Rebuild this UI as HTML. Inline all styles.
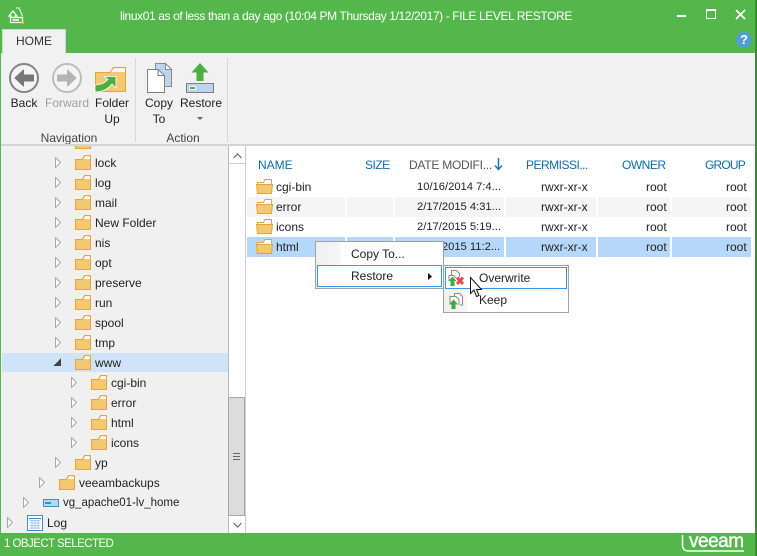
<!DOCTYPE html>
<html><head><meta charset="utf-8"><style>
html,body{margin:0;padding:0}
body{width:757px;height:556px;position:relative;overflow:hidden;background:#54b74b;font-family:"Liberation Sans",sans-serif;font-size:12px;color:#222}
.a{position:absolute;white-space:nowrap}
.t{position:absolute;white-space:nowrap;line-height:16px;height:16px}
.c{text-align:center;transform:translateX(-50%)}
svg{position:absolute;overflow:visible}
.h{color:#0b6cb3}
.d{font-size:11.2px}
.p{font-size:11.5px}
</style></head><body>
<svg width="0" height="0" style="position:absolute"><defs>
<symbol id="f" viewBox="0 0 16 15"><path d="M.5 4.500H7.500L9.500 .5H15.500V14.500H.5Z" fill="#f3c873" stroke="#e4a83a"/><path d="M8.800 4L10.300 1.200H14.800V4Z" fill="#fff"/></symbol>
<symbol id="o" viewBox="0 0 17 15"><path d="M1.500 8V3.500H7.500L9 .5H15.500V8Z" fill="#fff" stroke="#e0a63c"/><path d="M1.500 14.500L.5 5.500H16.500L15.500 14.500Z" fill="#f3c873" stroke="#e0a63c"/></symbol>
<symbol id="x" viewBox="0 0 6 11"><path d="M.5.5L5.500 5.500.5 10.500Z" fill="#fff" stroke="#a8a8a8"/></symbol>
</defs></svg>

<!-- title -->
<svg style="left:8px;top:7px" width="17" height="17" viewBox="0 0 17 17"><path d="M1 9L5 4 9 9H7V11H3V9Z" fill="none" stroke="#fff" stroke-width="1.200"/><path d="M8 1H11L14.500 9" fill="none" stroke="#dfe8de" stroke-width="1.200"/><path d="M2.500 10.500H14.500V15.500H2.500Z" fill="#54b74b" stroke="#fff" stroke-width="1.300"/><path d="M4.500 13H11" stroke="#fff" stroke-width="1.500"/><circle cx="14.500" cy="15" r="1.800" fill="#f0c050"/></svg>
<div class="t" style="left:120px;top:8px;color:#fff;font-size:12px;letter-spacing:-.39px">linux01 as of less than a day ago (10:04 PM Thursday 1/12/2017) - FILE LEVEL RESTORE</div>
<div class="a" style="left:677px;top:15px;width:9px;height:2px;background:#fff"></div>
<div class="a" style="left:706px;top:9px;width:8px;height:7px;border:1px solid #fff;border-top-width:2px"></div>
<svg style="left:735px;top:9px" width="11" height="11"><path d="M1 1L10 10M10 1L1 10" stroke="#fff" stroke-width="1.600"/></svg>
<div class="a" style="left:736px;top:32px;width:16px;height:16px;border-radius:50%;background:#4f9fd3;color:#fff;font-weight:bold;font-size:13px;line-height:16px;text-align:center">?</div>
<div class="a" style="left:755px;top:0;width:2px;height:556px;background:#3d8a36"></div>

<!-- ribbon -->
<div class="a" style="left:1px;top:53px;width:754px;height:91px;background:#f1f1f1"></div>
<div class="a" style="left:2px;top:29px;width:62px;height:25px;background:#f1f1f1;border:1px solid #d6d6d6;border-bottom:0"></div>
<div class="t" style="left:16px;top:33px;color:#333">HOME</div>

<svg style="left:9px;top:63px" width="30" height="30" viewBox="0 0 30 30"><circle cx="15" cy="15" r="14" fill="#f4f4f4" stroke="#838383" stroke-width="2"/><path d="M6 15L14.500 7V12H24.500V18H14.500V23Z" fill="#777" stroke="#777" stroke-linejoin="round"/></svg>
<svg style="left:52px;top:63px" width="30" height="30" viewBox="0 0 30 30"><circle cx="15" cy="15" r="14" fill="#f4f4f4" stroke="#bdbdbd" stroke-width="2"/><path d="M24 15L15.500 7V12H5.500V18H15.500V23Z" fill="#b4b4b4" stroke="#b4b4b4" stroke-linejoin="round"/></svg>
<svg style="left:95px;top:67px" width="32" height="25" viewBox="0 0 32 25"><path d="M.5 24.500V5.500H15L18.500 .5H30.500V24.500Z" fill="#f3c873" stroke="#e0a63c"/><path d="M16 5L19 1.200H29.800V5Z" fill="#fff"/><path d="M0 18C6 18 10 16 13 12.500L9.500 9.500H21V21L17 17C13 22 8 25 0 25Z" fill="#4bb040" stroke="#fff" stroke-width=".8"/></svg>
<div class="t c" style="left:24px;top:95px">Back</div>
<div class="t c" style="left:67px;top:95px;color:#a0a0a0">Forward</div>
<div class="t c" style="left:112px;top:95px">Folder</div>
<div class="t c" style="left:112px;top:111px">Up</div>
<div class="t c" style="left:69px;top:130px;color:#444">Navigation</div>
<div class="a" style="left:135px;top:58px;width:1px;height:84px;background:#d8d8d8"></div>

<svg style="left:147px;top:63px" width="26" height="30" viewBox="0 0 26 30"><path d="M8.500.5H18.500L24.500 6.500V23.500H8.500Z" fill="#bcd4ee" stroke="#8a8a8a" stroke-width="1"/><path d="M18.500.5V6.500H24.500Z" fill="#fff" stroke="#8a8a8a"/><path d="M.5 6.500H11L17.500 12.500V29.500H.5Z" fill="#fff" stroke="#808080"/><path d="M11 6.500V12.500H17.500" fill="none" stroke="#808080"/></svg>
<svg style="left:186px;top:63px" width="28" height="30" viewBox="0 0 28 30"><path d="M14 0L22.500 9.500H17.500V18H10.500V9.500H5.500Z" fill="#4bb040"/><path d="M.5 20.500H27.500V29.500H.5Z" fill="#bcd4ee" stroke="#808080"/><path d="M3.500 23.500H9.500V26.500H3.500Z" fill="#4bb040" stroke="#fff"/></svg>
<div class="t c" style="left:159px;top:95px">Copy</div>
<div class="t c" style="left:159px;top:111px">To</div>
<div class="t c" style="left:201px;top:95px">Restore</div>
<svg style="left:197px;top:117px" width="7" height="4"><path d="M0 0H6L3 3Z" fill="#666"/></svg>
<div class="t c" style="left:183px;top:130px;color:#444">Action</div>
<div class="a" style="left:227px;top:58px;width:1px;height:84px;background:#d8d8d8"></div>
<div class="a" style="left:1px;top:144px;width:754px;height:2px;background:#d4d4d4"></div>

<!-- tree -->
<div class="a" style="left:1px;top:146px;width:227px;height:387px;background:#f0f0f0;overflow:hidden">
<div class="a" style="left:1px;top:207px;width:226px;height:19px;background:#cfe4f8"></div>
<svg style="left:74px;top:-12px" width="16" height="15"><use href="#f"/></svg>
</div>
<svg style="left:55px;top:157px" width="6" height="11"><use href="#x"/></svg><svg style="left:75px;top:155px" width="16" height="15"><use href="#f"/></svg><div class="t" style="left:95px;top:155px">lock</div>
<svg style="left:55px;top:177px" width="6" height="11"><use href="#x"/></svg><svg style="left:75px;top:175px" width="16" height="15"><use href="#f"/></svg><div class="t" style="left:95px;top:175px">log</div>
<svg style="left:55px;top:197px" width="6" height="11"><use href="#x"/></svg><svg style="left:75px;top:195px" width="16" height="15"><use href="#f"/></svg><div class="t" style="left:95px;top:195px">mail</div>
<svg style="left:55px;top:217px" width="6" height="11"><use href="#x"/></svg><svg style="left:75px;top:215px" width="16" height="15"><use href="#f"/></svg><div class="t" style="left:95px;top:215px">New Folder</div>
<svg style="left:55px;top:237px" width="6" height="11"><use href="#x"/></svg><svg style="left:75px;top:235px" width="16" height="15"><use href="#f"/></svg><div class="t" style="left:95px;top:235px">nis</div>
<svg style="left:55px;top:257px" width="6" height="11"><use href="#x"/></svg><svg style="left:75px;top:255px" width="16" height="15"><use href="#f"/></svg><div class="t" style="left:95px;top:255px">opt</div>
<svg style="left:55px;top:277px" width="6" height="11"><use href="#x"/></svg><svg style="left:75px;top:275px" width="16" height="15"><use href="#f"/></svg><div class="t" style="left:95px;top:275px">preserve</div>
<svg style="left:55px;top:297px" width="6" height="11"><use href="#x"/></svg><svg style="left:75px;top:295px" width="16" height="15"><use href="#f"/></svg><div class="t" style="left:95px;top:295px">run</div>
<svg style="left:55px;top:317px" width="6" height="11"><use href="#x"/></svg><svg style="left:75px;top:315px" width="16" height="15"><use href="#f"/></svg><div class="t" style="left:95px;top:315px">spool</div>
<svg style="left:55px;top:337px" width="6" height="11"><use href="#x"/></svg><svg style="left:75px;top:335px" width="16" height="15"><use href="#f"/></svg><div class="t" style="left:95px;top:335px">tmp</div>
<svg style="left:54px;top:359px" width="7" height="7"><path d="M6.500.5V6.500H.5Z" fill="#444" stroke="#444"/></svg><svg style="left:75px;top:355px" width="16" height="15"><use href="#f"/></svg><div class="t" style="left:95px;top:355px">www</div>
<svg style="left:71px;top:377px" width="6" height="11"><use href="#x"/></svg><svg style="left:91px;top:375px" width="16" height="15"><use href="#f"/></svg><div class="t" style="left:111px;top:375px">cgi-bin</div>
<svg style="left:71px;top:397px" width="6" height="11"><use href="#x"/></svg><svg style="left:91px;top:395px" width="16" height="15"><use href="#f"/></svg><div class="t" style="left:111px;top:395px">error</div>
<svg style="left:71px;top:417px" width="6" height="11"><use href="#x"/></svg><svg style="left:91px;top:415px" width="16" height="15"><use href="#f"/></svg><div class="t" style="left:111px;top:415px">html</div>
<svg style="left:71px;top:437px" width="6" height="11"><use href="#x"/></svg><svg style="left:91px;top:435px" width="16" height="15"><use href="#f"/></svg><div class="t" style="left:111px;top:435px">icons</div>
<svg style="left:55px;top:457px" width="6" height="11"><use href="#x"/></svg><svg style="left:75px;top:455px" width="16" height="15"><use href="#f"/></svg><div class="t" style="left:95px;top:455px">yp</div>
<svg style="left:39px;top:477px" width="6" height="11"><use href="#x"/></svg><svg style="left:59px;top:475px" width="16" height="15"><use href="#f"/></svg><div class="t" style="left:79px;top:475px">veeambackups</div>
<svg style="left:23px;top:497px" width="6" height="11"><use href="#x"/></svg>
<svg style="left:43px;top:499px" width="16" height="8"><rect x=".5" y=".5" width="15" height="7" fill="#bcd4ee" stroke="#3f8fc9"/><rect x="2" y="3" width="6" height="2" fill="#3f8fc9"/></svg>
<div class="t p" style="left:63px;top:495px">vg_apache01-lv_home</div>
<svg style="left:7px;top:517px" width="6" height="11"><use href="#x"/></svg>
<svg style="left:27px;top:515px" width="16" height="16" viewBox="0 0 16 16"><rect x=".5" y=".5" width="15" height="15" fill="#fff" stroke="#3f8fc9"/><path d="M2 3.500H14" stroke="#3f8fc9"/><path d="M2.500 5.500H13.500M2.500 8H13.500M2.500 10.500H13.500M2.500 13H13.500M5 5V14M8 5V14M11 5V14" stroke="#a9c8e6"/></svg>
<div class="t" style="left:47px;top:515px">Log</div>

<!-- scrollbar -->
<div class="a" style="left:228px;top:146px;width:17px;height:387px;background:#fff;border-left:1px solid #bbb;box-sizing:border-box"></div>
<div class="a" style="left:229px;top:147px;width:16px;height:17px;background:#fff;border-bottom:1px solid #ccc;box-sizing:border-box"></div>
<svg style="left:233px;top:153px" width="9" height="6"><path d="M.5 5L4.500 1 8.500 5" fill="none" stroke="#666" stroke-width="1.200"/></svg>
<div class="a" style="left:228px;top:397px;width:17px;height:119px;background:#dcdcdc;border:1px solid #a8a8a8;box-sizing:border-box"></div>
<div class="a" style="left:233px;top:453px;width:7px;height:1px;background:#666;box-shadow:0 3px #666,0 6px #666"></div>
<svg style="left:233px;top:522px" width="9" height="6"><path d="M.5 1L4.500 5 8.500 1" fill="none" stroke="#666" stroke-width="1.200"/></svg>

<!-- list -->
<div class="a" style="left:245px;top:146px;width:510px;height:387px;background:#fff;border-left:1px solid #ccc;box-sizing:border-box"></div>
<div class="t h" style="left:258px;top:157px">NAME</div>
<div class="t h" style="left:365px;top:157px;letter-spacing:-.5px">SIZE</div>
<div class="t" style="left:409px;top:157px;color:#555;letter-spacing:-.25px">DATE MODIFI...</div>
<svg style="left:494px;top:158px" width="9" height="13"><path d="M4.500 0V11M1 7.500L4.500 11.500 8 7.500" fill="none" stroke="#1b78c0" stroke-width="1.500"/></svg>
<div class="t h" style="left:526px;top:157px;letter-spacing:-.5px">PERMISSI...</div>
<div class="t h" style="left:622px;top:157px;letter-spacing:-.5px">OWNER</div>
<div class="t h" style="left:705px;top:157px;letter-spacing:-.8px">GROUP</div>

<div class="a" style="left:247px;top:197px;width:98px;height:20px;background:#f5f5f5"></div>
<div class="a" style="left:347px;top:197px;width:46px;height:20px;background:#f5f5f5"></div>
<div class="a" style="left:395px;top:197px;width:109px;height:20px;background:#f5f5f5"></div>
<div class="a" style="left:506px;top:197px;width:90px;height:20px;background:#f5f5f5"></div>
<div class="a" style="left:598px;top:197px;width:72px;height:20px;background:#f5f5f5"></div>
<div class="a" style="left:672px;top:197px;width:79px;height:20px;background:#f5f5f5"></div>
<div class="a" style="left:247px;top:237px;width:98px;height:20px;background:#b5d7f9"></div>
<div class="a" style="left:347px;top:237px;width:46px;height:20px;background:#b5d7f9"></div>
<div class="a" style="left:395px;top:237px;width:109px;height:20px;background:#b5d7f9"></div>
<div class="a" style="left:506px;top:237px;width:90px;height:20px;background:#b5d7f9"></div>
<div class="a" style="left:598px;top:237px;width:72px;height:20px;background:#b5d7f9"></div>
<div class="a" style="left:672px;top:237px;width:79px;height:20px;background:#b5d7f9"></div>

<svg style="left:256px;top:179px" width="17" height="15"><use href="#o"/></svg><div class="t" style="left:276px;top:179px">cgi-bin</div><div class="t d" style="left:417px;top:179px">10/16/2014 7:4...</div><div class="t" style="left:541px;top:179px">rwxr-xr-x</div><div class="t" style="left:646px;top:179px">root</div><div class="t" style="left:726px;top:179px">root</div>
<svg style="left:256px;top:199px" width="17" height="15"><use href="#o"/></svg><div class="t" style="left:276px;top:199px">error</div><div class="t d" style="left:417px;top:199px">2/17/2015 4:31...</div><div class="t" style="left:541px;top:199px">rwxr-xr-x</div><div class="t" style="left:646px;top:199px">root</div><div class="t" style="left:726px;top:199px">root</div>
<svg style="left:256px;top:219px" width="17" height="15"><use href="#o"/></svg><div class="t" style="left:276px;top:219px">icons</div><div class="t d" style="left:417px;top:219px">2/17/2015 5:19...</div><div class="t" style="left:541px;top:219px">rwxr-xr-x</div><div class="t" style="left:646px;top:219px">root</div><div class="t" style="left:726px;top:219px">root</div>
<svg style="left:256px;top:239px" width="17" height="15"><use href="#o"/></svg><div class="t" style="left:276px;top:239px">html</div><div class="t d" style="left:417px;top:239px">2/17/2015 11:2...</div><div class="t" style="left:541px;top:239px">rwxr-xr-x</div><div class="t" style="left:646px;top:239px">root</div><div class="t" style="left:726px;top:239px">root</div>

<!-- context menu -->
<div class="a" style="left:315px;top:241px;width:129px;height:48px;background:linear-gradient(90deg,#f0f0f0 0,#f6f6f6 24px,#fff 25px);border:1px solid #a0a0a0;box-sizing:border-box"></div>
<div class="a" style="left:317px;top:265px;width:125px;height:22px;background:#fff;border:1px solid #3a96e8;box-sizing:border-box"></div>
<div class="t" style="left:351px;top:246px">Copy To...</div>
<div class="t" style="left:351px;top:268px">Restore</div>
<svg style="left:428px;top:273px" width="4" height="7"><path d="M0 0L4 3.500 0 7Z" fill="#111"/></svg>
<div class="a" style="left:443px;top:265px;width:126px;height:48px;background:linear-gradient(90deg,#f0f0f0 0,#f6f6f6 23px,#fff 24px);border:1px solid #a0a0a0;box-sizing:border-box"></div>
<div class="a" style="left:445px;top:267px;width:122px;height:22px;background:#fff;border:1px solid #3a96e8;box-sizing:border-box"></div>
<svg style="left:448px;top:270px" width="16" height="16" viewBox="0 0 16 16"><path d="M3.500 5.500V.5H8.500L11.500 3.500V7M1 11V5.500H5.500L8 8" fill="#fff" stroke="#888"/><path d="M4.500 6.500L8.500 11H6.500V16H2.500V11H.5Z" fill="#3fae3a"/><path d="M9 7.500L15 14M15 7.500L9 14" stroke="#ea4a55" stroke-width="3"/></svg>
<svg style="left:448px;top:293px" width="16" height="16" viewBox="0 0 16 16"><path d="M6.500 3V.5H11.500L14.500 3.500V12H12M2 11V3.500H8L11 6.500V12" fill="#fff" stroke="#888"/><path d="M5.500 6.500L10 11.500H7.500V16H3.500V11.500H1Z" fill="#3fae3a"/></svg>
<div class="t" style="left:479px;top:270px">Overwrite</div>
<div class="t" style="left:479px;top:292px">Keep</div>
<svg style="left:470px;top:277px" width="13" height="21" viewBox="0 0 13 21"><path d="M.5.5V16.500L4 13 6.500 19.500 9 18.500 6.500 12.500H11.500Z" fill="#fff" stroke="#111"/></svg>

<!-- status -->
<div class="t" style="left:4px;top:536px;color:#fff;font-size:11.500px;letter-spacing:-.55px">1 OBJECT SELECTED</div>
<div class="t" style="left:689px;top:533px;color:#fff;font-size:19px;letter-spacing:-.5px;-webkit-text-stroke:.4px #fff;line-height:18px;height:18px">veeam</div>
<svg style="left:681px;top:535px" width="64" height="18"><path d="M1.500 0V10Q1.500 16 8 16H63" fill="none" stroke="#fff" stroke-width="1.500"/></svg>
</body></html>
